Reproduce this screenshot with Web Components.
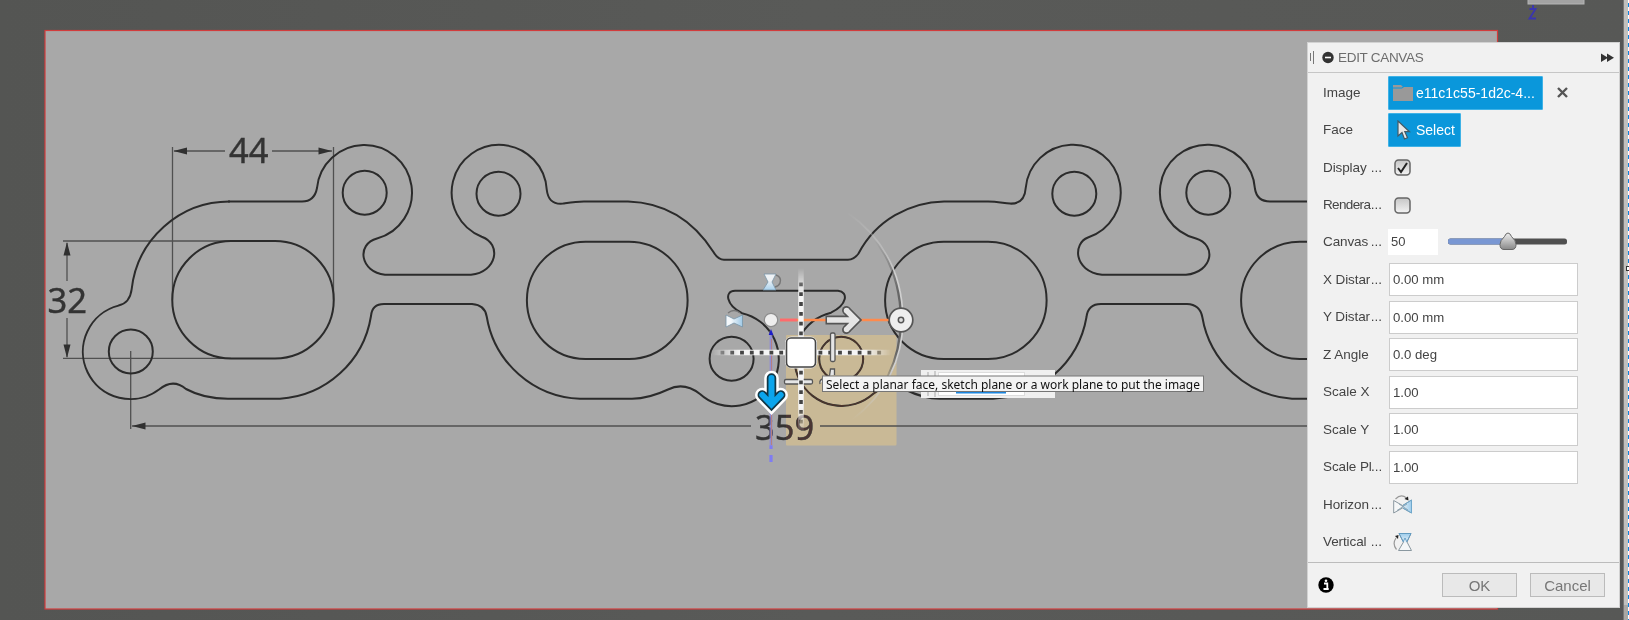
<!DOCTYPE html>
<html lang="en">
<head>
<meta charset="utf-8">
<title>Edit Canvas</title>
<style>
html,body{margin:0;height:100%;overflow:hidden}
body{font-family:"Liberation Sans",Arial,sans-serif;background:#575856}
</style>
</head>
<body>
<cad-workspace>
  <sketch-viewport></sketch-viewport>
  <canvas-dialog slot="dialog">
    <form-row label="Image"><image-picker>e11c1c55-1d2c-4...</image-picker></form-row>
    <form-row label="Face"><select-button>Select</select-button></form-row>
    <form-row label="Display" cut><check-box checked></check-box></form-row>
    <form-row label="Rendera" cut tight><check-box></check-box></form-row>
    <form-row label="Canvas" cut><opacity-slider>50</opacity-slider></form-row>
    <form-row label="X Distar" cut><text-field>0.00 mm</text-field></form-row>
    <form-row label="Y Distar" cut><text-field>0.00 mm</text-field></form-row>
    <form-row label="Z Angle"><text-field>0.0 deg</text-field></form-row>
    <form-row label="Scale X"><text-field>1.00</text-field></form-row>
    <form-row label="Scale Y"><text-field>1.00</text-field></form-row>
    <form-row label="Scale Pl" cut><text-field>1.00</text-field></form-row>
    <form-row label="Horizon" cut><flip-icon></flip-icon></form-row>
    <form-row label="Vertical" cut><flip-icon vertical></flip-icon></form-row>
    <push-button slot="actions">OK</push-button>
    <push-button slot="actions">Cancel</push-button>
  </canvas-dialog>
</cad-workspace>
<script>
function define(name, html, init) {
  customElements.define(name, class extends HTMLElement {
    constructor() {
      super();
      this.attachShadow({mode: 'open'}).innerHTML = html;
    }
    connectedCallback() { if (init) init(this, this.shadowRoot); }
  });
}

define('cad-workspace', `<style>
:host{display:block;position:relative;width:1629px;height:620px;overflow:hidden;background:linear-gradient(90deg,#545553,#595a58 50%,#575856)}
.dock{position:absolute;left:1307px;top:42px}
.edge{position:absolute;right:0;top:0;width:9px;height:620px}
</style>
<slot></slot>
<div class="dock"><slot name="dialog"></slot></div>
<svg class="edge" viewBox="0 0 9 620">
<rect width="4" height="620" fill="#555"/><rect x="3" width="1.5" height="620" fill="#777"/><rect x="4" width="4" height="620" fill="#c2c0be"/><rect x="4" y="605" width="4" height="15" fill="#aaa7a4"/>
<rect x="8" width="1" height="620" fill="#fff"/><path d="M8.5 3V620" stroke="#0a84e0" stroke-dasharray="4 4"/>
<rect x="6.5" y="266.500" width="4" height="4" fill="#fff" stroke="#333"/></svg>`);

define('sketch-viewport', `<style>
:host{display:block;width:1629px;height:620px}
svg{display:block}
text{font-family:"Noto Sans","Open Sans",sans-serif}
</style>
<svg width="1629" height="620" viewBox="0 0 1629 620">
<defs>
<linearGradient id="fadeH"><stop offset="0" stop-color="#fff" stop-opacity="0"/><stop offset=".15" stop-color="#fff"/><stop offset=".85" stop-color="#fff"/><stop offset="1" stop-color="#fff" stop-opacity="0"/></linearGradient>
<linearGradient id="fadeV" x2="0" y2="1"><stop offset="0" stop-color="#fff" stop-opacity="0"/><stop offset=".15" stop-color="#fff"/><stop offset=".85" stop-color="#fff"/><stop offset="1" stop-color="#fff" stop-opacity="0"/></linearGradient>
<mask id="mh" maskUnits="userSpaceOnUse" x="700" y="340" width="200" height="26"><rect x="712" y="340" width="180" height="26" fill="url(#fadeH)"/></mask>
<mask id="mv" maskUnits="userSpaceOnUse" x="780" y="265" width="40" height="180"><rect x="780" y="268" width="40" height="164" fill="url(#fadeV)"/></mask>
<linearGradient id="arc" gradientUnits="userSpaceOnUse" x1="0" y1="212" x2="0" y2="420"><stop offset="0" stop-color="#ccc" stop-opacity="0"/><stop offset=".3" stop-color="#d0d0d0"/><stop offset=".75" stop-color="#d0d0d0"/><stop offset="1" stop-color="#ccc" stop-opacity="0"/></linearGradient>
<linearGradient id="arcDark" gradientUnits="userSpaceOnUse" x1="0" y1="240" x2="0" y2="390"><stop offset="0" stop-color="#666" stop-opacity="0"/><stop offset=".35" stop-color="#666"/><stop offset=".75" stop-color="#666"/><stop offset="1" stop-color="#666" stop-opacity="0"/></linearGradient>
<linearGradient id="glass"><stop offset=".3" stop-color="#f4f8fb"/><stop offset="1" stop-color="#9fc9e6"/></linearGradient>
<linearGradient id="glassV" x2="0" y2="1"><stop offset=".4" stop-color="#eef2f5"/><stop offset="1" stop-color="#a9d2ee"/></linearGradient>
</defs>
<rect x="45" y="30.500" width="1452.500" height="578.500" fill="#a8a8a8" stroke="#d23c3c" stroke-width="1.200"/>
<rect x="1528" y="-10" width="56" height="14" fill="#a3a3a3" stroke="#b4b4b4"/>
<path d="M1529.500 9H1535.500L1529.500 18.500H1536M1533 5V9" fill="none" stroke="#3a35b0" stroke-width="1.800"/>
<rect x="786" y="335" width="110.500" height="110.500" rx="1" fill="#c9b996"/>

<g fill="none" stroke="#505050" stroke-width="1.300">
<path d="M172.500 147V300M333.500 147V300M174 151H225M272 151H332M63 241H231M63 358.300H231M67 243V281M67 318V357M130.700 351V429M132 426H751M820 426H1307"/>
</g>
<path fill="#303030" d="M173.500 151l13.500-3.500v7zM332 151l-13.500-3.500v7zM67 242l-3.500 13.500h7zM67 358l-3.500-13.500h7zM132 426l13.500-3.500v7z"/>
<g fill="#333" stroke="#333" stroke-width=".4" font-size="34.500">
<text x="229" y="162.500">44</text><text x="47.500" y="313">32</text><text x="755" y="440">359</text></g>

<g fill="none" stroke="#2b2b2b" stroke-width="2">
<path d="M228 201.500H302Q314.500 201.500 317 188A47.600 47.600 0 1 1 377 238.500C356 244 360 272 385 274.700H471C497 272 502 244 481.700 236.700A47.600 47.600 0 1 1 546.800 190C548 200 554 204.500 563 203.600C570 202.500 576 201.400 584 201.400H628Q682 203 713.300 251.700Q718 259.800 724 259.800H848Q854 259.800 858.500 253.500C876 220 910 202 944 201.400H988C997 201.400 1003 203 1010 203.600C1019 204 1025 199 1025.700 188A47.600 47.600 0 1 1 1088 237.500C1073 243 1073 271 1102 274.800H1186C1213 272 1217 245 1196 238.500A47.600 47.600 0 1 1 1255 189Q1257 201.400 1270 201.400H1310"/>
<path d="M230 201.500A98.500 98.500 0 0 0 131.700 289Q130 303 118.500 305.600A47.500 47.500 0 1 0 159 389.500Q173 378 186 389Q204 398.800 228 398.800H280A98.500 98.500 0 0 0 371 316Q372 304 384 304H472Q485 305 486.700 316.500A98.500 98.500 0 0 0 580 398.800H632Q649 398.500 668 389.500Q684 381.500 700 394A47.100 47.100 0 1 0 742 313.200C726 305 724 291 735 290.800H838C849 292 847 305 831 312.700A47.200 47.200 0 1 0 873 394Q889 381.500 905 389.500Q923 398.500 940 398.800H993A98.500 98.500 0 0 0 1086.500 317Q1088 304 1101 304H1187Q1200 304.500 1202.300 317A98.500 98.500 0 0 0 1292 398.800H1310"/>
<path d="M231 241H275A58 58 0 0 1 275 358.500H231A58 58 0 0 1 231 241ZM585.500 241.700H629A58 58 0 0 1 629 359H585.500A58 58 0 0 1 585.500 241.700ZM943.700 241.700H988A58 58 0 0 1 988 359H943.700A58 58 0 0 1 943.700 241.700ZM1310 241.700H1299.700A58 58 0 0 0 1299.700 359H1310"/>
<circle cx="130.800" cy="351.500" r="22"/><circle cx="364.700" cy="192.700" r="22"/><circle cx="498.500" cy="193.700" r="22"/><circle cx="731.600" cy="358.700" r="22"/><circle cx="841.200" cy="358.700" r="22"/><circle cx="1074.300" cy="193.700" r="22"/><circle cx="1208.300" cy="192.700" r="22"/>
</g>
<rect x="786" y="335" width="110.500" height="110.500" fill="#4a3510" style="mix-blend-mode:lighten"/>

<path d="M771 331V446" stroke="#8a86e0" stroke-width="2.800" opacity=".75"/><path d="M771.500 339V445" stroke="#b58080" stroke-width="1"/>
<path d="M771 445.500V449M771 455V462" stroke="#7f7cf2" stroke-width="3.200"/>
<path d="M771 329l2.300 6h-4.600z" fill="#1c1cc8"/>
<path d="M848 213C885 240 901 277 901.500 320C901 360 886 393 852 420" fill="none" stroke="url(#arcDark)" stroke-width="3.500"/>
<path d="M848 213C886 240 902.500 277 903 320C902.500 360 887 393 852 420" fill="none" stroke="url(#arc)" stroke-width="1.700"/>
<path d="M780 320H900" stroke="#ff8a4c" stroke-width="2.700"/><path d="M780 320H797" stroke="#ff6a6e" stroke-width="2.700"/>

<g mask="url(#mh)"><path d="M712 352.600H892" stroke="#f5f5f5" stroke-width="5.500"/><path d="M720.500 352.600H886" stroke="#444" stroke-width="3.600" stroke-dasharray="3.800 6"/></g>
<g mask="url(#mv)"><path d="M801 268V432" stroke="#f5f5f5" stroke-width="5.500"/><path d="M801 282.500V426" stroke="#444" stroke-width="3.600" stroke-dasharray="3.800 6"/></g>
<rect x="786.500" y="338" width="29" height="29" rx="5" fill="#fff" stroke="#eee" stroke-width="3"/>
<rect x="786.500" y="338" width="29" height="29" rx="4.500" fill="#fff" stroke="#454545" stroke-width="1.600"/>

<g fill="none" stroke-linejoin="miter"><path d="M825.500 320H855M846.500 310.500L856 320L846.500 329.500" stroke="#555" stroke-width="8.800"/><circle cx="846.300" cy="310.300" r="4.300" fill="#555"/><circle cx="846.300" cy="329.700" r="4.300" fill="#555"/><path d="M827 320H855M846.500 310.500L856 320L846.500 329.500" stroke="#e5e5e5" stroke-width="5.400"/><circle cx="846.500" cy="310.500" r="2.700" fill="#e5e5e5"/><circle cx="846.500" cy="329.500" r="2.700" fill="#e5e5e5"/></g>
<circle cx="901" cy="320" r="11.800" fill="#eee" stroke="#555" stroke-width="1.700"/><circle cx="901" cy="320" r="2.700" fill="#ddd" stroke="#555" stroke-width="1.500"/>
<circle cx="771" cy="320" r="6.700" fill="#eee" stroke="#8e8e8e" stroke-width="1.200"/>
<g fill="#e5e5e5" stroke="#555" stroke-width="1.300"><rect x="830.500" y="333" width="4.500" height="28.500" rx="1.500"/><rect x="784.500" y="379.500" width="28" height="4.500" rx="1.500"/><path d="M829.500 376l1-7h4v6M824 379q-5 0-4 5"/></g>
<path d="M801 370V392" stroke="#f5f5f5" stroke-width="5.500"/><path d="M801 370.700V392" stroke="#444" stroke-width="3.600" stroke-dasharray="3.800 6"/>
<g fill="none" stroke-linecap="round">
<path d="M771.500 378V404M762.300 395L771.500 404.500L780.700 395" stroke="#fff" stroke-width="14.500"/>
<path d="M771.500 378V404M762.300 395L771.500 404.500L780.700 395" stroke="#123746" stroke-width="9.500"/>
<path d="M771.500 378V404M762.300 395L771.500 404.500L780.700 395" stroke="#0ba5ec" stroke-width="6"/></g>

<g stroke="#7896a8" stroke-width=".8"><path d="M764 274H776L772 282L776 290H763L768 282Z" fill="url(#glassV)"/><path d="M776 275q6 2 4 8q-1 3-5 4" fill="none" stroke="#777" stroke-width="1.500"/>
<path d="M726 315L734 319L742.500 315V327L734 323L726 327Z" fill="url(#glass)"/><path d="M728 313q6-5 12 0" fill="none" stroke="#777" stroke-width="1.300"/></g>

<rect x="921" y="370" width="134" height="28" fill="#f0f0f0"/><rect x="938.500" y="372.500" width="86" height="23" fill="#fff" stroke="#ddd"/><path d="M956 392.500H1006" stroke="#1a86e0" stroke-width="2"/><path d="M928 372v4M928 392v4M935 371v26" stroke="#ccc" stroke-width="2"/>
<rect x="822.500" y="376" width="381" height="15.500" fill="#f3f3f3" stroke="#767676"/>
<text x="826" y="388.500" font-size="12" textLength="374" lengthAdjust="spacingAndGlyphs" fill="#111">Select a planar face, sketch plane or a work plane to put the image</text>
</svg>`);

define('canvas-dialog', `<style>
:host{display:flex;flex-direction:column;box-sizing:border-box;width:313px;height:566px;background:#f1f1f1;border:1px solid #d2d2d2;color:#444;font-size:13px}
header{display:flex;align-items:center;box-sizing:border-box;height:30px;border-bottom:1px solid #c6c6c6;padding:0 5px 1px 1px;flex:none}
header span{flex:1;font-size:13.500px;color:#6d6d6d;letter-spacing:-.3px;padding-left:3px}
.rows{flex:1;padding-top:1px}
footer{display:flex;align-items:center;box-sizing:border-box;height:45px;border-top:1px solid #bcbcbc;padding:0 14px 0 10px;gap:13px;flex:none}
footer svg{margin-right:auto}
</style>
<header><svg width="26" height="16" viewBox="0 0 26 16"><path d="M1.500 4v8M4.500 2v13" stroke="#777"/><circle cx="19" cy="8.500" r="5.700" fill="#333"/><path d="M16 8.500h6" stroke="#fff" stroke-width="1.600"/></svg><span>EDIT CANVAS</span><svg width="13" height="10" viewBox="0 0 13 10"><path d="M0 1.500L7 5.700L0 10ZM6 1.500L13 5.700L6 10Z" fill="#333"/></svg></header>
<div class="rows"><slot></slot></div>
<footer><svg width="16" height="16" viewBox="0 0 16 16"><circle cx="8" cy="8" r="7.700"/><path d="M6 6.500h3.300v5M5.500 12h5.200" stroke="#fff" stroke-width="1.800" fill="none"/><circle cx="8" cy="3.700" r="1.300" fill="#fff"/></svg><slot name="actions"></slot></footer>`);

define('form-row', `<style>
:host{display:flex;align-items:center;height:37.45px;padding-left:15px;box-sizing:border-box}
.name{width:59px;display:flex;flex:none;white-space:pre;margin-right:6px;font-size:13.500px;line-height:18px}
.name b{font-weight:400;display:block}
:host([cut]) .name b{width:48px;letter-spacing:-.1px}
:host([cut][tight]) .name b{letter-spacing:-.65px}
.name i{font-style:normal;display:none}
:host([cut]) .name i{display:block}
.val{flex:1;display:flex;align-items:center}
</style><div class="name"><b></b><i>...</i></div><div class="val"><slot></slot></div>`,
(el, r) => { r.querySelector('b').textContent = el.getAttribute('label'); });

define('image-picker', `<style>
:host{display:flex;align-items:center;gap:14px}
.b{display:flex;align-items:center;box-sizing:border-box;width:155px;height:34px;background:#0a97db;border:1px solid #3fb2e6;border-radius:1px;color:#fff;font-size:14px;padding-left:4px;gap:3px;white-space:nowrap}
</style><div class="b"><svg width="20" height="17" viewBox="0 0 20 17"><path d="M0 1H8L10 3H20V17H0Z" fill="#999"/><path d="M0 4H9L11 2.500" stroke="#0a97db" fill="none"/></svg><slot></slot></div>
<svg width="11" height="11" viewBox="0 0 11 11"><path d="M1 1L10 10M10 1L1 10" stroke="#555" stroke-width="2.400"/></svg>`);

define('select-button', `<style>
:host{display:flex;align-items:center;box-sizing:border-box;width:73px;height:34px;background:#0a97db;border:1px solid #3fb2e6;border-radius:1px;color:#fff;font-size:14px;padding-left:8px;gap:5px}
</style><svg width="14" height="20" viewBox="0 0 14 20"><path d="M1 1V16L5 12.500L7.500 19L10.500 17.700L7.800 11.700H12.500Z" fill="#e8e8e8" stroke="#445a66" stroke-width="1.200"/></svg><slot></slot>`);

define('check-box', `<style>
:host{display:block;margin-left:6px;width:17px;height:17px}
.tick{display:none}:host([checked]) .tick{display:block}
svg{display:block}
</style><svg width="17" height="17" viewBox="0 0 17 17"><defs><linearGradient id="g" x2="0" y2="1"><stop offset="0" stop-color="#c6c6c6"/><stop offset="1" stop-color="#f3f3f3"/></linearGradient></defs><rect x="1" y="1" width="15" height="15" rx="3.500" fill="url(#g)" stroke="#666" stroke-width="1.500"/><path class="tick" d="M4 9L7 13L13 4" fill="none" stroke="#222" stroke-width="2"/></svg>`);

define('opacity-slider', `<style>
:host{display:flex;align-items:center;gap:9px}
.n{box-sizing:border-box;width:50px;height:26px;background:#fff;padding:5px 3px;font-size:13px;line-height:16px}
</style><div class="n"><slot></slot></div><svg width="121" height="20" viewBox="0 0 121 20"><defs><linearGradient id="k" x2="0" y2="1"><stop offset="0" stop-color="#f0f0f0"/><stop offset="1" stop-color="#888"/></linearGradient></defs><rect x="1" y="6.500" width="119" height="6" rx="2.500" fill="#505050"/><path d="M61 6.500H3.500Q1 6.500 1 9.500T3.500 12.500H61Z" fill="#7997d3"/><path d="M61 1Q63 1 64.500 4.500Q69 8.500 69 12.500Q69 17.500 65 17.500H57Q53 17.500 53 12.500Q53 8.500 57.500 4.500Q59 1 61 1Z" fill="url(#k)" stroke="#666"/></svg>`);

define('text-field', `<style>
:host{display:flex;align-items:center;box-sizing:border-box;margin-left:1px;width:189px;height:33px;background:#fff;border:1px solid #ccc;padding-left:3px;font-size:13.200px}
</style><slot></slot>`);

define('flip-icon', `<style>
:host{display:block;margin-left:5px;width:20px;height:20px}
svg{display:block}
.v{display:none}
:host([vertical]) .v{display:block}
:host([vertical]) .h{display:none}
</style><svg width="20" height="20" viewBox="0 0 20 20"><defs><linearGradient id="f"><stop offset=".4" stop-color="#f5f7f8"/><stop offset="1" stop-color="#9cccec"/></linearGradient><linearGradient id="u" x2="0" y2="1"><stop offset="0" stop-color="#9cccec"/><stop offset=".6" stop-color="#f5f7f8"/></linearGradient></defs>
<g class="h"><path d="M.7 5.500L9.500 10.500L18.500 5V18L9.500 13L.7 18Z" fill="url(#f)" stroke="#8a98a0"/><path d="M10 10.500L18.500 5V18L10 13" fill="none" stroke="#6fa8cc"/><path d="M4 15.500L14 9M6 9L15 15" stroke="#7d98a8" stroke-width=".8"/><path d="M2.500 4Q8-1.500 13.500 3" fill="none" stroke="#999" stroke-width="1.200"/><path d="M11.500 4L15.500 5.500L15 1.500Z" fill="#222"/></g>
<g class="v"><path d="M6 1.500H18L14 10L18.500 18.500H5.500L10.500 10Z" fill="url(#u)" stroke="#8a98a0"/><path d="M6 1.500H18L14 9.500M10 9.500L6 1.500M10 10L12 6L14 10" fill="none" stroke="#5d9bc4" stroke-width=".9"/><path d="M3.500 17.500Q-1 12 3 6" fill="none" stroke="#999" stroke-width="1.200"/><path d="M2 4L5.500 3L5 7Z" fill="#222"/></g></svg>`);

define('push-button', `<style>
:host{display:flex;align-items:center;justify-content:center;box-sizing:border-box;width:75px;height:24px;background:#e8e8e8;border:1px solid #bbb;color:#777;font-size:15px}
</style><slot></slot>`);
</script>
</body>
</html>
